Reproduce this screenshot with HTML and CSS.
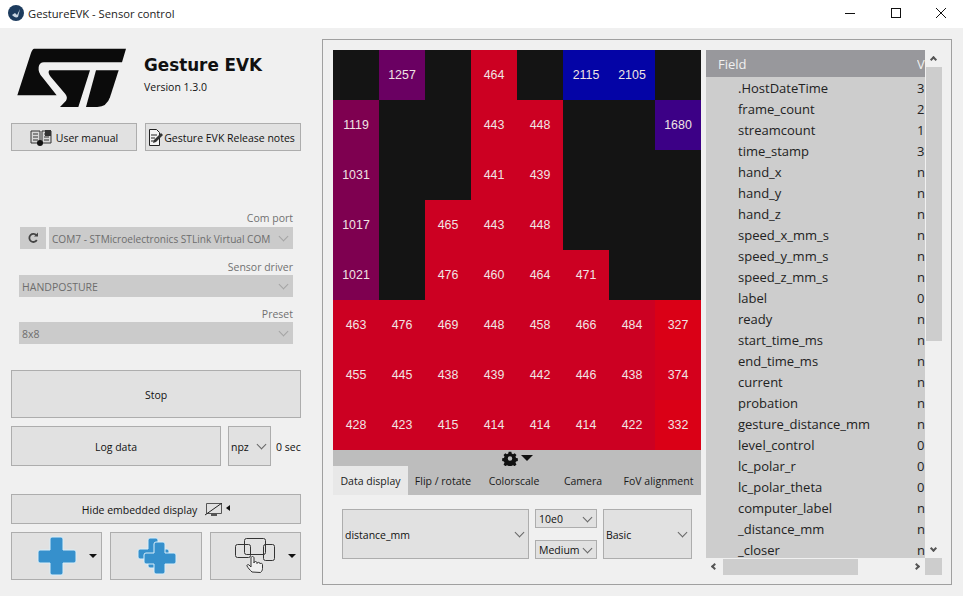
FILE: index.html
```html
<!doctype html>
<html>
<head>
<meta charset="utf-8"/>
<title>GestureEVK - Sensor control</title>
<link rel="stylesheet" href="styles.css">
</head>
<body>
<div class="titlebar">
	<svg class="app-icon" width="16" height="16" viewBox="0 0 16 16"><circle cx="8" cy="8" r="8" fill="#1d3c5e"/><path d="M4 10c2 2 4 3 6 2l2-8-3 6-2-2z" fill="#c9d6e2"/></svg>
	<span class="title-text">GestureEVK - Sensor control</span>
	<div class="win-btns">
		<svg width="12" height="12" viewBox="0 0 12 12"><path d="M1 6.500h10" stroke="#111" fill="none"/></svg>
		<svg width="12" height="12" viewBox="0 0 12 12"><rect x="1.500" y="1.500" width="9" height="9" stroke="#111" fill="none"/></svg>
		<svg width="12" height="12" viewBox="0 0 12 12"><path d="M1 1l10 10M11 1L1 11" stroke="#111" fill="none"/></svg>
	</div>
</div>
<div class="main">
	<div class="side">
		<div class="brand">
			<svg class="logo" width="125" height="72" viewBox="0 0 375 216">
				<path d="M72 20H348L336 61H102Q88 61 86 75Q84 92 96 104L140 160H22L62 36Q66 22 72 20Z" fill="#0b0b0b"/>
				<path d="M118 85H240L205 195H150L168 176Q174 166 166 156L122 104Q112 92 118 85Z" fill="#0b0b0b"/>
				<path d="M258 85H326L300 166Q290 195 262 195H228Z" fill="#0b0b0b"/>
			</svg>
			<div class="brand-text">
				<div class="brand-name">Gesture EVK</div>
				<div class="brand-version">Version 1.3.0</div>
			</div>
		</div>
		<div class="links">
			<div class="btn link-manual">
				<svg width="22" height="18" viewBox="0 0 22 18"><path d="M1 2h9v12H1zM12 2h9v12h-9z" fill="#d8d8d8" stroke="#333"/><path d="M3 5h5M3 8h5M3 11h5M14 5h5M14 8h5M14 11h5" stroke="#333"/><rect x="15" y="1" width="6" height="6" fill="#333"/><circle cx="10" cy="14" r="3" fill="#111"/></svg>
				<span>User manual</span>
			</div>
			<div class="btn link-notes">
				<svg width="15" height="17" viewBox="0 0 15 17"><path d="M1.500 .5h7l3 3v13h-10z" fill="#f4f4f4" stroke="#222"/><path d="M3 6h6M3 9h4M3 12h3" stroke="#222"/><path d="M5 14l1-3 7-7 2 2-7 7z" fill="#333"/></svg>
				<span>Gesture EVK Release notes</span>
			</div>
		</div>
		<div class="device">
			<div class="field-label">Com port</div>
			<div class="com-row">
				<div class="refresh">
					<svg width="12" height="12" viewBox="0 0 12 12"><path d="M9.500 3.500A4 4 0 1 0 9.800 8" fill="none" stroke="#444" stroke-width="1.800"/><path d="M7 4.500h4v-4z" fill="#444"/></svg>
				</div>
				<div class="combo off com-combo">COM7 - STMicroelectronics STLink Virtual COM</div>
			</div>
			<div class="field-label">Sensor driver</div>
			<div class="combo off">HANDPOSTURE</div>
			<div class="field-label">Preset</div>
			<div class="combo off">8x8</div>
		</div>
		<div class="btn stop">Stop</div>
		<div class="log-row">
			<div class="btn log-btn">Log data</div>
			<div class="combo npz">npz</div>
			<span class="log-time">0 sec</span>
		</div>
		<div class="btn hide-btn">
			<span>Hide embedded display</span>
			<svg width="18" height="13" viewBox="0 0 18 13"><path d="M1.500 .5h15v10h-15z" fill="none" stroke="#555"/><path d="M0 12L17 0" stroke="#222"/><path d="M6 12h6" stroke="#555" stroke-width="2"/></svg>
			<i class="tri-left"></i>
		</div>
		<div class="tools">
			<div class="btn tool tool-add">
				<svg width="40" height="40" viewBox="0 0 40 40"><path class="cross" d="M15 1h9a2 2 0 0 1 2 2v11h11a2 2 0 0 1 2 2v9a2 2 0 0 1-2 2H26v10a2 2 0 0 1-2 2h-9a2 2 0 0 1-2-2V27H3a2 2 0 0 1-2-2v-9a2 2 0 0 1 2-2h10V3a2 2 0 0 1 2-2z"/></svg>
				<i class="tri-down"></i>
			</div>
			<div class="btn tool tool-multi">
				<svg width="40" height="38" viewBox="0 0 40 38"><path class="cross" d="M13 1h6a2 2 0 0 1 2 2v9h9a2 2 0 0 1 2 2v6a2 2 0 0 1-2 2h-9v7a2 2 0 0 1-2 2h-6a2 2 0 0 1-2-2v-7H3a2 2 0 0 1-2-2v-6a2 2 0 0 1 2-2h8V3a2 2 0 0 1 2-2z"/><path class="cross" d="M19 5h7a2 2 0 0 1 2 2v9h9a2 2 0 0 1 2 2v7a2 2 0 0 1-2 2h-9v8a2 2 0 0 1-2 2h-7a2 2 0 0 1-2-2v-8H9a2 2 0 0 1-2-2v-7a2 2 0 0 1 2-2h8V7a2 2 0 0 1 2-2z"/></svg>
			</div>
			<div class="btn tool tool-win">
				<svg width="41" height="36" viewBox="0 0 41 36"><g fill="none" stroke="#333"><rect x=".5" y="6.500" width="15" height="13" rx="2"/><rect x="9.500" y=".5" width="21" height="16" rx="2"/><rect x="28.500" y="6.500" width="11" height="16" rx="2"/></g><path d="M17 34c-2-2-4-4-5-6-.5-1 1-2 2-1l2 2v-9c0-2 3-2 3 0v5c0-2 3-2 3 0v.5c0-1.500 3-1.500 3 0v.5c0-1 2.500-1 2.500 .5v4c0 2-1 3-2 4z" fill="#efefef" stroke="#333"/></svg>
				<i class="tri-down"></i>
			</div>
		</div>
	</div>
	<div class="panel">
		<div class="display">
			<div class="heatmap">
				<div class="cell"></div><div class="cell c-purple">1257</div><div class="cell"></div><div class="cell c-red">464</div><div class="cell"></div><div class="cell c-blue">2115</div><div class="cell c-blue">2105</div><div class="cell"></div>
				<div class="cell c-plum">1119</div><div class="cell"></div><div class="cell"></div><div class="cell c-red">443</div><div class="cell c-red">448</div><div class="cell"></div><div class="cell"></div><div class="cell c-indigo">1680</div>
				<div class="cell c-plum">1031</div><div class="cell"></div><div class="cell"></div><div class="cell c-red">441</div><div class="cell c-red">439</div><div class="cell"></div><div class="cell"></div><div class="cell"></div>
				<div class="cell c-plum">1017</div><div class="cell"></div><div class="cell c-red">465</div><div class="cell c-red">443</div><div class="cell c-red">448</div><div class="cell"></div><div class="cell"></div><div class="cell"></div>
				<div class="cell c-plum">1021</div><div class="cell"></div><div class="cell c-red">476</div><div class="cell c-red">460</div><div class="cell c-red">464</div><div class="cell c-red">471</div><div class="cell"></div><div class="cell"></div>
				<div class="cell c-red">463</div><div class="cell c-red">476</div><div class="cell c-red">469</div><div class="cell c-red">448</div><div class="cell c-red">458</div><div class="cell c-red">466</div><div class="cell c-red">484</div><div class="cell c-near">327</div>
				<div class="cell c-red">455</div><div class="cell c-red">445</div><div class="cell c-red">438</div><div class="cell c-red">439</div><div class="cell c-red">442</div><div class="cell c-red">446</div><div class="cell c-red">438</div><div class="cell c-mid">374</div>
				<div class="cell c-red">428</div><div class="cell c-red">423</div><div class="cell c-red">415</div><div class="cell c-red">414</div><div class="cell c-red">414</div><div class="cell c-red">414</div><div class="cell c-red">422</div><div class="cell c-near">332</div>
			</div>
			<div class="gear-bar">
				<svg width="16" height="16" viewBox="0 0 16 16"><path fill-rule="evenodd" fill="#111" d="M6.500 1h3l.4 2 1.500.7 1.800-1.100 2 2.100-1.100 1.700.6 1.600 2 .4v3l-2 .4-.6 1.500 1.100 1.800-2 2-1.800-1.100-1.500.6-.4 2h-3l-.4-2-1.500-.6-1.800 1.100-2-2 1.100-1.800-.6-1.500-2-.4v-3l2-.4.6-1.600-1.100-1.700 2-2.100 1.800 1.100 1.500-.7zM8 6a2.500 2.500 0 1 0 0 5 2.500 2.500 0 0 0 0-5z" transform="translate(.8 .8) scale(.9)"/></svg>
				<i class="tri-big"></i>
			</div>
			<div class="tabs">
				<div class="tab tab-data active">Data display</div>
				<div class="tab tab-flip">Flip / rotate</div>
				<div class="tab tab-scale">Colorscale</div>
				<div class="tab tab-cam">Camera</div>
				<div class="tab tab-fov">FoV alignment</div>
			</div>
			<div class="controls">
				<div class="combo ctl-field">distance_mm</div>
				<div class="ctl-stack">
					<div class="combo">10e0</div>
					<div class="combo">Medium</div>
				</div>
				<div class="combo ctl-mode">Basic</div>
			</div>
		</div>
		<div class="fields">
			<div class="table-view">
				<div class="table-head"><span class="col-name">Field</span><span class="col-val">V</span></div>
				<div class="row"><span class="col-name">.HostDateTime</span><span class="col-val">3</span></div>
				<div class="row"><span class="col-name">frame_count</span><span class="col-val">2</span></div>
				<div class="row"><span class="col-name">streamcount</span><span class="col-val">1</span></div>
				<div class="row"><span class="col-name">time_stamp</span><span class="col-val">3</span></div>
				<div class="row"><span class="col-name">hand_x</span><span class="col-val">n</span></div>
				<div class="row"><span class="col-name">hand_y</span><span class="col-val">n</span></div>
				<div class="row"><span class="col-name">hand_z</span><span class="col-val">n</span></div>
				<div class="row"><span class="col-name">speed_x_mm_s</span><span class="col-val">n</span></div>
				<div class="row"><span class="col-name">speed_y_mm_s</span><span class="col-val">n</span></div>
				<div class="row"><span class="col-name">speed_z_mm_s</span><span class="col-val">n</span></div>
				<div class="row"><span class="col-name">label</span><span class="col-val">0</span></div>
				<div class="row"><span class="col-name">ready</span><span class="col-val">n</span></div>
				<div class="row"><span class="col-name">start_time_ms</span><span class="col-val">n</span></div>
				<div class="row"><span class="col-name">end_time_ms</span><span class="col-val">n</span></div>
				<div class="row"><span class="col-name">current</span><span class="col-val">n</span></div>
				<div class="row"><span class="col-name">probation</span><span class="col-val">n</span></div>
				<div class="row"><span class="col-name">gesture_distance_mm</span><span class="col-val">n</span></div>
				<div class="row"><span class="col-name">level_control</span><span class="col-val">0</span></div>
				<div class="row"><span class="col-name">lc_polar_r</span><span class="col-val">0</span></div>
				<div class="row"><span class="col-name">lc_polar_theta</span><span class="col-val">0</span></div>
				<div class="row"><span class="col-name">computer_label</span><span class="col-val">n</span></div>
				<div class="row"><span class="col-name">_distance_mm</span><span class="col-val">n</span></div>
				<div class="row"><span class="col-name">_closer</span><span class="col-val">n</span></div>
			</div>
			<div class="vscroll">
				<div class="arrow-box"><i class="arrow a-up"></i></div>
				<div class="vthumb"></div>
				<div class="arrow-box vbottom"><i class="arrow a-down"></i></div>
			</div>
			<div class="hscroll">
				<div class="harrow"><i class="arrow a-left"></i></div>
				<div class="hthumb"></div>
				<div class="harrow hright"><i class="arrow a-right"></i></div>
			</div>
			<div class="corner"></div>
		</div>
	</div>
</div>
</body>
</html>
```

FILE: styles.css
```css
* {
	box-sizing: border-box;
}
body {
	margin: 0;
	width: 963px;
	height: 596px;
	overflow: hidden;
	background: #f0f0f0;
	font-family: "Open Sans", "Noto Sans", sans-serif;
	font-size: 10.500px;
	color: #111;
}
i {
	display: block;
}

/* title bar */
.titlebar {
	display: flex;
	align-items: center;
	height: 28px;
	padding-left: 8px;
	padding-bottom: 2px;
	background: #fff;
}
.title-text {
	margin-left: 4px;
	font-size: 11.200px;
	color: #222;
}
.win-btns {
	display: flex;
	gap: 33.500px;
	margin-left: auto;
	margin-right: 16px;
}

.main {
	display: flex;
	padding-left: 11px;
}
.side {
	width: 290px;
}

/* generic widgets */
.btn {
	display: flex;
	align-items: center;
	justify-content: center;
	padding-top: 1px;
	background: #e1e1e1;
	border: 1px solid #adadad;
}
.combo {
	display: flex;
	align-items: center;
	height: 22px;
	padding-top: 1px;
	padding-left: 2px;
	padding-right: 5px;
	background: #e1e1e1;
	border: 1px solid #adadad;
	white-space: nowrap;
	overflow: hidden;
}
.combo::after {
	content: "";
	flex: none;
	width: 6px;
	height: 6px;
	margin-left: auto;
	margin-top: -4px;
	border-right: 1px solid #666;
	border-bottom: 1px solid #666;
	transform: rotate(45deg);
}
.combo.off {
	background: #cbcbcb;
	border-color: #cbcbcb;
	color: #6d6d6d;
}
.combo.off::after {
	border-color: #a4a4a4;
}

/* logo + name */
.brand {
	display: flex;
	height: 58px;
	margin-top: 21px;
}
.logo {
	margin-left: -1px;
	margin-top: -7px;
	flex: none;
}
.brand-text {
	margin-left: 9px;
}
.brand-name {
	font-family: "DejaVu Sans", sans-serif;
	font-weight: bold;
	font-size: 16.800px;
	line-height: 20px;
	margin-top: 6px;
	color: #111;
}
.brand-version {
	line-height: 14px;
	margin-top: 5px;
}
.links {
	display: flex;
	gap: 8px;
	height: 28px;
	margin-top: 16px;
}
.link-manual {
	width: 126px;
	gap: 4px;
}
.link-notes {
	width: 156px;
	gap: 1px;
	padding-right: 3px;
}

/* com port, driver, preset */
.device {
	margin-top: 60px;
	margin-left: 8px;
	width: 274px;
}
.field-label {
	height: 14px;
	margin-top: 10px;
	margin-bottom: 1px;
	line-height: 14px;
	text-align: right;
	color: #707070;
}
.com-row {
	display: flex;
	gap: 3px;
	margin-left: 1px;
	margin-top: 2px;
	margin-bottom: 11px;
}
.refresh {
	display: flex;
	align-items: center;
	justify-content: center;
	flex: none;
	width: 26px;
	height: 22px;
	background: #cbcbcb;
}
.com-combo {
	flex: 1;
	font-size: 10.100px;
}

/* stop / log */
.stop {
	height: 48px;
	margin-top: 26px;
}
.log-row {
	display: flex;
	align-items: center;
	height: 40px;
	margin-top: 8px;
}
.log-btn {
	flex: none;
	width: 210px;
	height: 40px;
}
.npz {
	flex: none;
	width: 43px;
	height: 40px;
	margin-left: 7px;
	margin-right: 5px;
}
.log-time {
	white-space: nowrap;
	padding-top: 1px;
}
.hide-btn {
	height: 30px;
	margin-top: 28px;
	gap: 8px;
}
.tri-left {
	margin-left: -5px;
	margin-top: -3px;
	border-top: 3px solid transparent;
	border-bottom: 3px solid transparent;
	border-right: 4px solid #111;
}
.tools {
	display: flex;
	gap: 8px;
	height: 48px;
	margin-top: 8px;
}
.tool {
	flex: none;
	justify-content: flex-start;
	gap: 12px;
	padding-top: 0;
}
.tool-add {
	width: 91px;
	padding-left: 25px;
}
.tool-multi {
	width: 92px;
	padding-left: 26px;
}
.tool-win {
	width: 91px;
	padding-left: 24px;
}
.tri-down {
	border-left: 4px solid transparent;
	border-right: 4px solid transparent;
	border-top: 4px solid #111;
}
.cross {
	fill: #3690cc;
	stroke: #d9eef9;
	stroke-width: 1;
}

/* right hand panel */
.panel {
	display: flex;
	gap: 5px;
	width: 630px;
	height: 546px;
	margin-left: 21px;
	margin-top: 11px;
	padding: 10px;
	border: 1px solid #a0a0a0;
}
.display {
	width: 368px;
}
.heatmap {
	display: grid;
	grid-template-columns: repeat(8, 46px);
	grid-auto-rows: 50px;
	background: #141414;
}
.cell {
	display: flex;
	align-items: center;
	justify-content: center;
	font-family: "Liberation Sans", sans-serif;
	font-size: 12.400px;
	color: #f0e4e4;
}
.c-red {
	background: #cc0022;
}
.c-near {
	background: #da0016;
}
.c-mid {
	background: #d4001c;
}
.c-plum {
	background: #7e0050;
}
.c-purple {
	background: #6a0062;
}
.c-indigo {
	background: #3c0086;
}
.c-blue {
	background: #0404a6;
}
.gear-bar {
	display: flex;
	align-items: center;
	justify-content: center;
	gap: 3px;
	height: 16px;
	background: #bdbdbd;
}
.tri-big {
	border-left: 6px solid transparent;
	border-right: 6px solid transparent;
	border-top: 6px solid #111;
}
.tabs {
	display: flex;
	height: 29px;
	background: #bdbdbd;
}
.tab {
	display: flex;
	align-items: center;
	justify-content: center;
	white-space: nowrap;
	color: #1a1a1a;
}
.tab.active {
	background: #e8e8e8;
}
.tab-data {
	width: 75px;
}
.tab-flip {
	width: 70px;
}
.tab-scale {
	width: 72px;
}
.tab-cam {
	width: 66px;
}
.tab-fov {
	width: 85px;
}
.controls {
	display: flex;
	gap: 6px;
	height: 50px;
	margin-top: 14px;
	margin-left: 9px;
}
.ctl-field {
	width: 187px;
	height: 50px;
}
.ctl-stack {
	display: flex;
	flex-direction: column;
	justify-content: space-between;
	width: 62px;
}
.ctl-stack .combo {
	height: 19px;
	padding-left: 3px;
}
.ctl-mode {
	width: 89px;
	height: 50px;
}

/* field table */
.fields {
	display: grid;
	grid-template-columns: 219px 17px;
	grid-template-rows: 508px 17px;
	width: 236px;
}
.table-view {
	overflow: hidden;
	background: #cdcdcd;
	font-size: 13px;
}
.table-head {
	display: flex;
	align-items: center;
	height: 27px;
	padding-left: 12px;
	background: #98989c;
	color: #f0f0f0;
}
.row {
	display: flex;
	align-items: center;
	height: 21px;
	padding-left: 32px;
	color: #222;
}
.col-name {
	flex: 1;
	white-space: nowrap;
}
.col-val {
	width: 8px;
	overflow: hidden;
}
.vscroll {
	display: flex;
	flex-direction: column;
}
.arrow-box {
	display: flex;
	align-items: center;
	justify-content: center;
	height: 17px;
}
.vthumb {
	height: 274px;
	margin-left: 1px;
	background: #cdcdcd;
}
.vbottom {
	margin-top: auto;
}
.hscroll {
	display: flex;
	align-items: center;
}
.harrow {
	display: flex;
	align-items: center;
	justify-content: center;
	width: 17px;
	height: 17px;
}
.hright {
	margin-left: auto;
}
.hthumb {
	width: 135px;
	height: 16px;
	background: #cdcdcd;
}
.corner {
	background: #cdcdcd;
}
.arrow {
	width: 5px;
	height: 5px;
	border-top: 2px solid #555;
	border-left: 2px solid #555;
}
.a-up {
	transform: rotate(45deg);
	margin-top: 2px;
}
.a-down {
	transform: rotate(225deg);
	margin-bottom: 2px;
}
.a-left {
	transform: rotate(-45deg);
}
.a-right {
	transform: rotate(135deg);
}
```
